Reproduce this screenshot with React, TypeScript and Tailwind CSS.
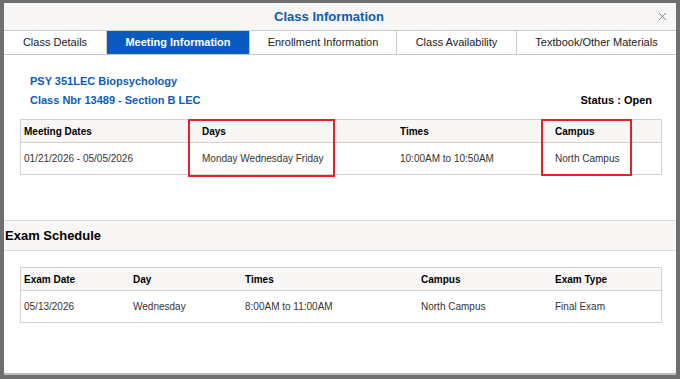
import { X } from "lucide-react";

const TABS = [
  { label: "Class Details", w: "w-[103px]" },
  { label: "Meeting Information", w: "w-[143px]", active: true },
  { label: "Enrollment Information", w: "w-[147px]" },
  { label: "Class Availability", w: "w-[120px]" },
  { label: "Textbook/Other Materials", w: "w-[159px]" },
];

const MEETING_COLS = ["w-[178px]", "w-[198px]", "w-[155px]", "flex-1"];
const EXAM_COLS = ["w-[109px]", "w-[112px]", "w-[176px]", "w-[134px]", "flex-1"];

const Grid = ({
  cols,
  head,
  row,
}: {
  cols: string[];
  head: string[];
  row: string[];
}) => (
  <div className="border border-[#d4d0cd]">
    <div className="flex h-[23px] items-center border-b border-[#d4d0cd] bg-[#f8f7f6] font-bold text-[10px] text-black">
      {head.map((h, i) => (
        <div className={`${cols[i]} pl-[3px]`} key={h}>
          {h}
        </div>
      ))}
    </div>
    <div className="flex h-[31px] items-center text-[10px] text-[#333]">
      {row.map((c, i) => (
        <div className={`${cols[i]} pl-[3px]`} key={i}>
          {c}
        </div>
      ))}
    </div>
  </div>
);

export default function App() {
  return (
    <div
      className="h-[379px] w-[680px] overflow-hidden bg-[#6f6f6f] px-[4px] pt-[3px]"
      style={{ fontFamily: '"Liberation Sans", Arial, sans-serif' }}
    >
      <div className="flex h-[372px] flex-col border-b-2 border-[#bdbdbd] bg-white">
        {/* title bar */}
        <div className="relative flex h-[27px] items-center justify-center bg-[#f7f6f5] pr-[22px]">
          <span className="font-bold text-[13px] text-[#0b5cb8]">
            Class Information
          </span>
          <X className="absolute right-[7px] size-[13px] text-[#666]" strokeWidth={1.4} />
        </div>

        {/* tabs */}
        <div className="flex h-[25px] border-y border-[#c9c9c9]">
          {TABS.map((t) => (
            <div
              className={`${t.w} flex items-center justify-center border-r border-[#c9c9c9] text-[11px] last:border-r-0 ${
                t.active ? "bg-[#0a5bc1] font-bold text-white" : "text-[#222]"
              }`}
              key={t.label}
            >
              {t.label}
            </div>
          ))}
        </div>

        {/* class heading */}
        <div className="flex items-end justify-between pt-[17px] pr-[24px] pl-[26px]">
          <div className="font-bold text-[11px] text-[#0b5cb8] leading-[19px]">
            <div>PSY 351LEC Biopsychology</div>
            <div>Class Nbr 13489 - Section B LEC</div>
          </div>
          <div className="font-bold text-[11px] text-black leading-[19px]">
            Status : Open
          </div>
        </div>

        {/* meeting table */}
        <div className="relative mt-[9px] mr-[14px] ml-[16px]">
          <Grid
            cols={MEETING_COLS}
            head={["Meeting Dates", "Days", "Times", "Campus"]}
            row={[
              "01/21/2026 - 05/05/2026",
              "Monday Wednesday Friday",
              "10:00AM to 10:50AM",
              "North Campus",
            ]}
          />
          {/* highlight annotations */}
          <div className="absolute top-0 left-[168px] h-[58px] w-[147px] border-2 border-[#e3222c]" />
          <div className="absolute top-0 left-[521px] h-[57px] w-[91px] border-2 border-[#e3222c]" />
        </div>

        {/* exam schedule */}
        <div className="mt-[45px] flex h-[31px] items-center border-y border-[#dcdad8] bg-[#f8f7f6] pl-[1px] font-bold text-[13px] text-black">
          Exam Schedule
        </div>

        <div className="mt-[16px] mr-[14px] ml-[16px]">
          <Grid
            cols={EXAM_COLS}
            head={["Exam Date", "Day", "Times", "Campus", "Exam Type"]}
            row={[
              "05/13/2026",
              "Wednesday",
              "8:00AM to 11:00AM",
              "North Campus",
              "Final Exam",
            ]}
          />
        </div>
      </div>
    </div>
  );
}
